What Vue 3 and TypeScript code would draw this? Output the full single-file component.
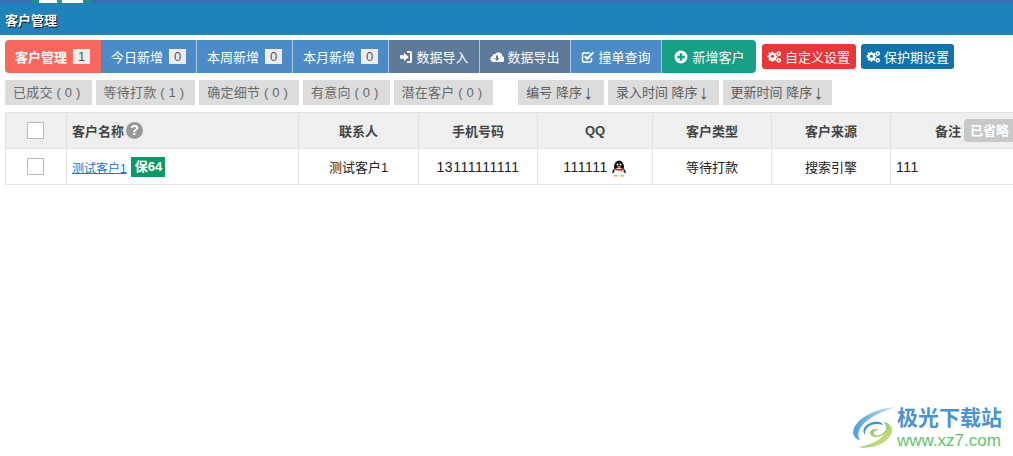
<script setup lang="ts">
interface Tab { label: string; count?: number; icon?: string; tone: string }
const tabs: Tab[] = [
  { label: '客户管理', count: 1, tone: 'red' },
  { label: '今日新增', count: 0, tone: 'blue' },
  { label: '本周新增', count: 0, tone: 'blue' },
  { label: '本月新增', count: 0, tone: 'blue' },
  { label: '数据导入', icon: 'in', tone: 'slate' },
  { label: '数据导出', icon: 'cloud', tone: 'slate' },
  { label: '撞单查询', icon: 'check', tone: 'blue' },
  { label: '新增客户', icon: 'plus', tone: 'green' }
]
const statuses = ['已成交 ( 0 )', '等待打款 ( 1 )', '确定细节 ( 0 )', '有意向 ( 0 )', '潜在客户 ( 0 )']
const sorts = ['编号 降序', '录入时间 降序', '更新时间 降序']
const cogs = 'M5 1.5h1.6l.3 1.3 1 .4 1.1-.7 1.1 1.1-.7 1.1.4 1 1.3.3v1.6l-1.3.3-.4 1 .7 1.1-1.1 1.1-1.1-.7-1 .4-.3 1.3H5l-.3-1.3-1-.4-1.1.7-1.1-1.1.7-1.1-.4-1L.5 7V5.4l1.3-.3.4-1-.7-1.1 1.1-1.1 1.1.7 1-.4z'
</script>

<template>
  <div class="page">
    <div class="topstrip"><span class="toplogo"><i></i></span></div>
    <header class="titlebar">客户管理</header>

    <div class="toolbar">
      <nav class="tabs">
        <a v-for="t in tabs" :key="t.label" class="tab" :class="[t.tone, 'i-' + (t.icon || 'none')]">
          <svg v-if="t.icon === 'in'" class="ico" viewBox="0 0 14 14"><path d="M8 1h3.500A1.500 1.500 0 0 1 13 2.500v9a1.500 1.500 0 0 1-1.500 1.500H8v-1.700h3V2.700H8z" fill="#fff"/><path d="M1 5.300h4V2.800L9.800 7 5 11.200V8.700H1z" fill="#fff"/></svg>
          <svg v-else-if="t.icon === 'cloud'" class="ico" viewBox="0 0 14 14"><path d="M3.200 12A3 3 0 0 1 2.600 6.100 2.300 2.300 0 0 1 5.400 4 3.700 3.700 0 0 1 12.200 6.300 2.900 2.900 0 0 1 11 12z" fill="#fff"/><path d="M6 5.500h2v2.700h1.600L7 10.900 4.400 8.200H6z" fill="#5d7a9a"/></svg>
          <svg v-else-if="t.icon === 'check'" class="ico" viewBox="0 0 14 14"><path d="M10.500 8v3a1 1 0 0 1-1 1H2.500a1 1 0 0 1-1-1V4a1 1 0 0 1 1-1H9" fill="none" stroke="#fff" stroke-width="1.500"/><path d="M3.800 6.200 6.300 8.800 12.400 2.300" fill="none" stroke="#fff" stroke-width="2"/></svg>
          <svg v-else-if="t.icon === 'plus'" class="ico" viewBox="0 0 14 14"><circle cx="7" cy="7" r="6.500" fill="#fff"/><path d="M5.800 3.300h2.400v2.500h2.500v2.400H8.200v2.500H5.800V8.200H3.300V5.800h2.500z" fill="#16a085"/></svg>
          <span>{{ t.label }}</span>
          <b v-if="t.count !== undefined" class="count">{{ t.count }}</b>
        </a>
      </nav>
      <div class="settings">
        <a class="setbtn red2">
          <svg class="ico" viewBox="0 0 16 14"><path :d="cogs" fill="#fff"/><circle cx="5.800" cy="6.200" r="1.700" fill="#e83737"/><circle cx="12.500" cy="3.300" r="2.500" fill="#fff"/><circle cx="12.500" cy="10.500" r="2.500" fill="#fff"/><circle cx="12.500" cy="3.300" r=".9" fill="#e83737"/><circle cx="12.500" cy="10.500" r=".9" fill="#e83737"/></svg>
          <span>自定义设置</span>
        </a>
        <a class="setbtn blue2">
          <svg class="ico" viewBox="0 0 16 14"><path :d="cogs" fill="#fff"/><circle cx="5.800" cy="6.200" r="1.700" fill="#0f72aa"/><circle cx="12.500" cy="3.300" r="2.500" fill="#fff"/><circle cx="12.500" cy="10.500" r="2.500" fill="#fff"/><circle cx="12.500" cy="3.300" r=".9" fill="#0f72aa"/><circle cx="12.500" cy="10.500" r=".9" fill="#0f72aa"/></svg>
          <span>保护期设置</span>
        </a>
      </div>
    </div>

    <div class="filters">
      <div class="group">
        <a v-for="s in statuses" :key="s" class="chip">{{ s }}</a>
      </div>
      <div class="group">
        <a v-for="s in sorts" :key="s" class="chip sort">{{ s }}<span class="arrow">↓</span></a>
      </div>
    </div>

    <div class="tablewrap">
      <table class="grid">
        <colgroup>
          <col style="width: 61px" /><col style="width: 232px" /><col style="width: 120px" /><col style="width: 119px" />
          <col style="width: 115px" /><col style="width: 119px" /><col style="width: 119px" /><col style="width: 160px" />
        </colgroup>
        <thead>
          <tr>
            <th><span class="cb"></span></th>
            <th class="left"><span class="namehead">客户名称<i class="help">?</i></span></th>
            <th>联系人</th>
            <th>手机号码</th>
            <th>QQ</th>
            <th>客户类型</th>
            <th>客户来源</th>
            <th class="notehead"><span class="notelabel">备注</span><span class="omit">已省略</span></th>
          </tr>
        </thead>
        <tbody>
          <tr>
            <td><span class="cb"></span></td>
            <td class="left"><a class="link">测试客户1</a><span class="bao">保64</span></td>
            <td>测试客户1</td>
            <td class="num">13111111111</td>
            <td class="num">111111<svg class="penguin" viewBox="0 0 16 18">
              <ellipse cx="8" cy="7" rx="5" ry="6.500" fill="#111"/>
              <ellipse cx="8" cy="12" rx="4.300" ry="4.500" fill="#fff"/>
              <path d="M3.200 8.500C1.500 10 1 12 1.200 13.500L3.500 12zM12.800 8.500C14.500 10 15 12 14.800 13.500L12.500 12z" fill="#222"/>
              <circle cx="6.500" cy="4.500" r="1" fill="#fff"/><circle cx="9.500" cy="4.500" r="1" fill="#fff"/>
              <path d="M6 6h4L8 7.500z" fill="#f2b021"/>
              <path d="M3.500 8c3 1.200 6 1.200 9 0l.5 1.500-2 .8.300 2-1.800-1.800C8 10.800 6 10.700 4 9.700z" fill="#d8201c"/>
              <path d="M3 15.500C4 14.800 6 15 7 16.500H2.500zM13 15.500C12 14.800 10 15 9 16.500H13.500z" fill="#f2a81d"/>
            </svg></td>
            <td>等待打款</td>
            <td>搜索引擎</td>
            <td class="left note num">111</td>
          </tr>
        </tbody>
      </table>
    </div>

    <aside class="watermark">
      <svg class="swirl" viewBox="0 0 46 44">
        <defs>
          <linearGradient id="wmA" x1="0" y1="0" x2="1" y2="0"><stop offset="0" stop-color="#4b9fdc"/><stop offset="1" stop-color="#cfe6f6"/></linearGradient>
          <linearGradient id="wmB" x1="0" y1="0" x2="1" y2="1"><stop offset="0" stop-color="#5cc46f"/><stop offset="1" stop-color="#e8e27a"/></linearGradient>
        </defs>
        <path d="M45 1C28 2 11 9 4 20 0 27 3 33 9 34 5 28 8 21 17 14 25 8 35 4 45 1z" fill="url(#wmA)"/>
        <path d="M14 29C10 24 14 18 22 16 28 15 32 17 32 19 27 17 20 18 17 21 14 24 14 26 14 29z" fill="#3e93d6"/>
        <path d="M19 27C19 23 25 22 28 24 24 24 22 26 23 28 25 31 31 29 34 25 36 22 35 18 32 16 38 16 42 21 41 26 39 34 29 40 20 41 14 42 10 42 8 41 19 39 31 34 33 28 28 33 20 32 19 27z" fill="url(#wmB)"/>
      </svg>
      <div class="wmtext">
        <strong>极光下载站</strong>
        <em>www.xz7.com</em>
      </div>
    </aside>
  </div>
</template>

<style scoped>
.page {
  position: relative;
  width: 1013px;
  height: 456px;
  overflow: hidden;
  background: #fff;
  font-family: "Liberation Sans", "Noto Sans CJK SC", sans-serif;
  font-size: 13px;
  color: #333;
}
.topstrip {
  height: 3px;
  background: #3b6db4;
  padding-left: 31px;
  overflow: hidden;
}
.toplogo {
  display: block;
  width: 60px;
  height: 3px;
  background: #1f8f8a;
  padding: 0 8px;
  box-sizing: border-box;
}
.toplogo i {
  display: block;
  height: 3px;
  background: linear-gradient(90deg, #fff 0 40%, #3f9a7d 40% 52%, #fff 52% 100%);
}
.titlebar {
  height: 32px;
  line-height: 35px;
  padding-left: 5px;
  box-sizing: border-box;
  background: #1f83bb;
  color: #fff;
  font-size: 13px;
  font-weight: 700;
  text-shadow: 1px 1px 0 #111;
}
.toolbar {
  display: flex;
  align-items: center;
  gap: 6px;
  padding: 5px 0 0 5px;
}
.tabs {
  display: flex;
  height: 33px;
}
.tab {
  display: flex;
  align-items: center;
  justify-content: center;
  gap: 3px;
  box-sizing: border-box;
  color: #fff;
  font-size: 13px;
  border-right: 1px solid #a8c6e2;
  flex: none;
}
.tab:first-child { border-radius: 4px 0 0 4px; width: 96px; font-weight: 700; border-right: 0; padding-right: 1px; }
.tab:nth-child(2), .tab:nth-child(3), .tab:nth-child(4) { width: 96px; }
.tab:nth-child(5) { width: 91px; }
.tab:nth-child(6) { width: 91px; }
.tab:nth-child(7) { width: 91px; }
.tab:last-child { border-radius: 0 4px 4px 0; width: 94px; gap: 4px; border-right: 0; padding-left: 1px; }
.tab.red { background: #f9675d; }
.tab.blue { background: #4a8bc8; }
.tab.slate { background: #5d7a9a; }
.tab.green { background: #16a085; }
.count {
  display: inline-block;
  min-width: 17px;
  height: 15px;
  line-height: 15px;
  margin-left: 3px;
  text-align: center;
  background: #f0ecec;
  color: #555;
  font-weight: 400;
  font-size: 13px;
}
.ico { width: 14px; height: 14px; flex: none; }
.setbtn .ico { width: 15px; height: 14px; }
.settings { display: flex; gap: 5px; }
.setbtn {
  display: flex;
  align-items: center;
  gap: 3px;
  height: 25px;
  padding-left: 5px;
  color: #fff;
  font-size: 13px;
  border-radius: 3px;
  box-sizing: border-box;
}
.red2 { width: 94px; background: #e83737; }
.blue2 { width: 93px; background: #0f72aa; }
.filters {
  display: flex;
  gap: 25px;
  padding: 7px 0 0 5px;
}
.group { display: flex; gap: 4px; }
.chip {
  display: block;
  height: 25px;
  line-height: 25px;
  padding: 0 11px 0 8px;
  background: #dcdcdc;
  color: #6a6a6a;
  font-size: 13px;
  letter-spacing: .2px;
  white-space: nowrap;
}
.chip.sort { color: #5a5a5a; padding-right: 11px; letter-spacing: 0; }
.chip.sort:nth-child(2) { padding-right: 10px; }
.chip.sort:last-child { padding-right: 9px; }
.arrow { font-size: 20px; line-height: 20px; margin-left: 1px; vertical-align: -2px; }
.tablewrap {
  margin: 7px 0 0 5px;
  overflow: hidden;
}
.grid {
  width: 1045px;
  table-layout: fixed;
  border-collapse: collapse;
  font-size: 13px;
}
.grid th, .grid td {
  border: 1px solid #e2e2e2;
  text-align: center;
  padding: 0;
  vertical-align: middle;
  white-space: nowrap;
}
.grid th {
  height: 35px;
  background: #efefef;
  color: #444;
  font-weight: 700;
}
.grid td { height: 35px; color: #222; }
.grid .left { text-align: left; padding-left: 5px; }
.grid th.left { font-weight: 400; }
.namehead { display: inline-flex; align-items: center; gap: 2px; font-weight: 700; }
.num { font-size: 14px; letter-spacing: .5px; }
.cb {
  display: inline-block;
  width: 15px;
  height: 15px;
  margin-right: 2px;
  border: 1px solid #bbb;
  background: #fff;
  vertical-align: middle;
}
.help {
  display: inline-block;
  width: 17px;
  height: 17px;
  line-height: 17px;
  border-radius: 50%;
  background: #999;
  color: #fff;
  font-style: normal;
  font-size: 14px;
  font-weight: 700;
  text-align: center;
}
.link { color: #2a6fd6; text-decoration: underline; font-weight: 400; font-size: 12px; vertical-align: middle; }
.bao {
  display: inline-block;
  margin-left: 4px;
  height: 20px;
  line-height: 20px;
  padding: 0 3px 0 4px;
  background: #0a9a65;
  color: #fff;
  font-weight: 700;
  vertical-align: middle;
}
.penguin { width: 16px; height: 18px; margin: -6px 0 -6px 3px; vertical-align: 0; }
.notehead { text-align: left !important; padding-left: 44px !important; }
.notelabel { display: inline-block; vertical-align: middle; }
.omit {
  display: inline-block;
  vertical-align: middle;
  margin-left: 3px;
  width: 70px;
  height: 23px;
  line-height: 23px;
  padding-left: 6px;
  box-sizing: border-box;
  text-align: left;
  background: #c8c8c8;
  color: #fff;
  border-radius: 3px;
}
.watermark {
  position: absolute;
  right: 11px;
  bottom: 6px;
  display: flex;
  align-items: center;
}
.swirl { width: 46px; height: 44px; }
.wmtext {
  display: flex;
  flex-direction: column;
  line-height: 1;
}
.wmtext strong {
  color: #4a93d4;
  font-size: 21px;
  font-weight: 700;
}
.wmtext em {
  margin-top: 4px;
  color: #5cc46f;
  font-style: normal;
  font-size: 17px;
}
</style>
